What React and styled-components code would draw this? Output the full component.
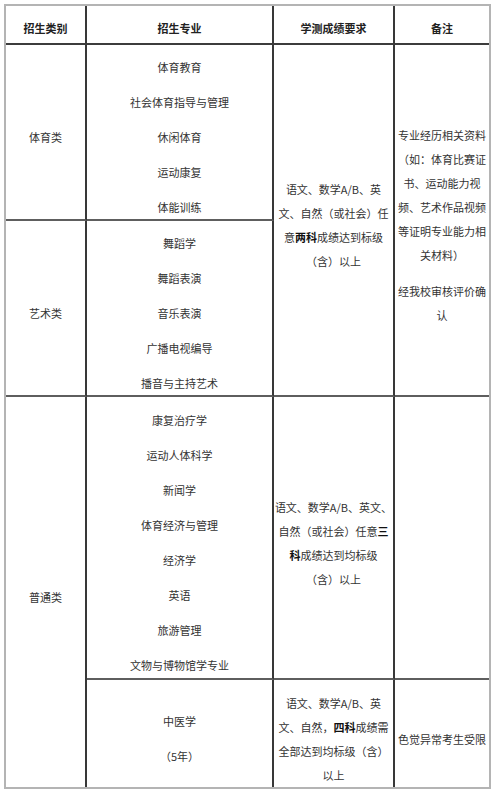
import React from 'react'
import styled, { createGlobalStyle } from 'styled-components'

const GlobalStyle = createGlobalStyle`
  body {
    margin: 0;
    background: #fff;
    font-family: "Noto Sans CJK SC", "Noto Sans", sans-serif;
  }
`

const Page = styled.div`
  padding: 4px;
`

// fixed rows so the merged cells line up with the screenshot
const Table = styled.div`
  display: grid;
  grid-template-columns: 81px 187px 121px 94px;
  grid-template-rows: 39px 176px 176px 283px 107px;
  width: 487px;
  box-sizing: border-box;
  border: 2px solid #b4b4b4;
`

const Cell = styled.div`
  grid-row: span ${(p) => p.$rows || 1};
  display: flex;
  flex-direction: column;
  align-items: center;
  justify-content: center;
  box-sizing: border-box;
  padding-top: 10px;
  min-height: 0;
  border-right: ${(p) => (p.$lastCol ? 'none' : '2px solid #383838')};
  border-bottom: ${(p) => (p.$lastRow ? 'none' : '2px solid #5e5e5e')};
  font-size: 11px;
  color: #333;
  text-align: center;
`

const HeadCell = styled(Cell)`
  padding-top: 7px;
  font-weight: 700;
  color: #222;
  border-bottom: 2px solid #3c3c3c;
`

const Major = styled.div`
  height: 35px;
  line-height: 35px;
  white-space: nowrap;
`

const Note = styled.div`
  line-height: 24px;
  white-space: nowrap;

  & + & {
    margin-top: 12px;
  }
`

const Strong = styled.b`
  font-weight: 700;
  color: #111;
`

const sports = ['体育教育', '社会体育指导与管理', '休闲体育', '运动康复', '体能训练']
const arts = ['舞蹈学', '舞蹈表演', '音乐表演', '广播电视编导', '播音与主持艺术']
const general = ['康复治疗学', '运动人体科学', '新闻学', '体育经济与管理', '经济学', '英语', '旅游管理', '文物与博物馆学专业']

const MajorList = ({ items }) => items.map((m) => <Major key={m}>{m}</Major>)

export default function App() {
  return (
    <Page>
      <GlobalStyle />
      <Table>
        <HeadCell>招生类别</HeadCell>
        <HeadCell>招生专业</HeadCell>
        <HeadCell>学测成绩要求</HeadCell>
        <HeadCell $lastCol>备注</HeadCell>

        <Cell>体育类</Cell>
        <Cell>
          <MajorList items={sports} />
        </Cell>
        <Cell $rows={2}>
          <Note>
            语文、数学A/B、英
            <br />
            文、自然（或社会）任
            <br />
            意<Strong>两科</Strong>成绩达到标级
            <br />
            （含）以上
          </Note>
        </Cell>
        <Cell $rows={2} $lastCol>
          <Note>
            专业经历相关资料
            <br />
            （如：体育比赛证
            <br />
            书、运动能力视
            <br />
            频、艺术作品视频
            <br />
            等证明专业能力相
            <br />
            关材料）
          </Note>
          <Note>
            经我校审核评价确
            <br />认
          </Note>
        </Cell>

        <Cell>艺术类</Cell>
        <Cell>
          <MajorList items={arts} />
        </Cell>

        <Cell $rows={2} $lastRow>
          普通类
        </Cell>
        <Cell>
          <MajorList items={general} />
        </Cell>
        <Cell>
          <Note>
            语文、数学A/B、英文、
            <br />
            自然（或社会）任意<Strong>三</Strong>
            <br />
            <Strong>科</Strong>成绩达到均标级
            <br />
            （含）以上
          </Note>
        </Cell>
        <Cell $lastCol />

        <Cell $lastRow>
          <Major>中医学</Major>
          <Major>（5年）</Major>
        </Cell>
        <Cell $lastRow>
          <Note>
            语文、数学A/B、英
            <br />
            文、自然，<Strong>四科</Strong>成绩需
            <br />
            全部达到均标级（含）
            <br />
            以上
          </Note>
        </Cell>
        <Cell $lastRow $lastCol>
          色觉异常考生受限
        </Cell>
      </Table>
    </Page>
  )
}
